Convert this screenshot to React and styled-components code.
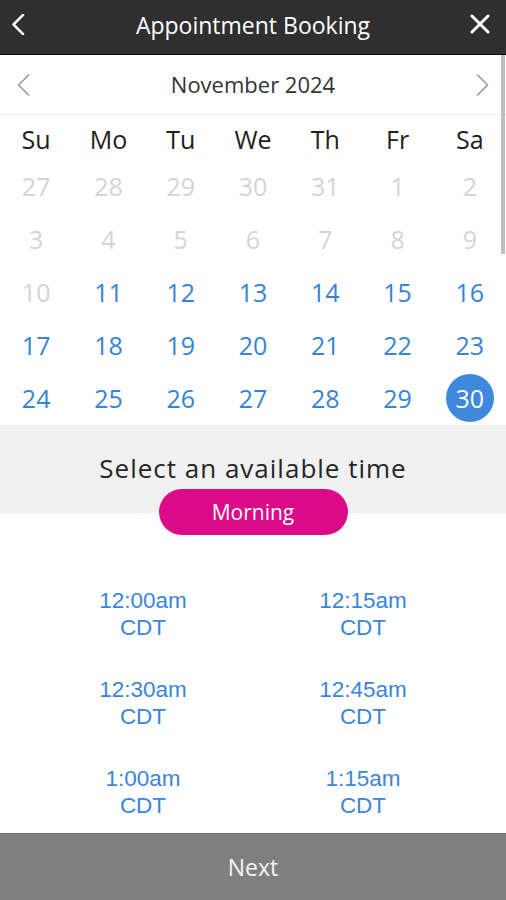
import React from 'react';
import styled, { createGlobalStyle } from 'styled-components';

const GlobalStyle = createGlobalStyle`
  html, body {
    margin: 0;
    padding: 0;
    background: #fff;
    font-family: "Open Sans", "Noto Sans", sans-serif;
  }
`;

const Screen = styled.div`
  position: relative;
  width: 506px;
  height: 900px;
  display: flex;
  flex-direction: column;
  overflow: hidden;
`;

const Header = styled.header`
  box-sizing: border-box;
  height: 55px;
  flex: 0 0 55px;
  padding-bottom: 6px;
  display: grid;
  grid-template-columns: 58px 1fr 58px;
  align-items: center;
  background: #2f2f2f;
  border-bottom: 1px solid #0c0c0c;
  color: #fff;
`;

const Title = styled.h1`
  margin: 0;
  text-align: center;
  font-size: 23px;
  font-weight: 400;
  line-height: 30px;
  padding-top: 2px;
`;

const IconButton = styled.div`
  display: flex;
  align-items: center;
  justify-content: flex-start;
  padding-left: ${({ end }) => (end ? '22px' : '12px')};
  height: 100%;
`;

const Body = styled.div`
  flex: 1;
  overflow: hidden;
`;

const MonthBar = styled.div`
  height: 59px;
  display: flex;
  align-items: center;
  justify-content: space-between;
  padding: 0 17px;
  border-bottom: 1px solid #e9e9e9;
`;

const MonthLabel = styled.span`
  font-size: 22px;
  color: #333;
  line-height: 30px;
  margin-top: -2px;
`;

const Grid = styled.div`
  display: grid;
  grid-template-columns: repeat(7, 1fr);
`;

const Weekday = styled.div`
  box-sizing: border-box;
  height: 44px;
  padding-top: 4px;
  display: flex;
  align-items: center;
  justify-content: center;
  font-size: 25px;
  color: #1e1e1e;
`;

const Day = styled.div`
  height: 53px;
  display: flex;
  align-items: center;
  justify-content: center;
  font-size: 25px;
  color: ${({ muted }) => (muted ? '#d4d4d4' : '#3584d6')};
`;

const Selected = styled.span`
  width: 48px;
  height: 48px;
  border-radius: 50%;
  background: #3f89dc;
  color: #fff;
  display: flex;
  align-items: center;
  justify-content: center;
`;

const TimeHeader = styled.div`
  margin-top: 1px;
  padding-top: 27px;
  display: flex;
  flex-direction: column;
  align-items: center;
  background: linear-gradient(#f1f1f1 0 88px, #fff 88px);
`;

const TimeTitle = styled.div`
  font-size: 26px;
  letter-spacing: 1px;
  line-height: 32px;
  color: #262626;
`;

const Pill = styled.div`
  margin-top: 5px;
  width: 189px;
  height: 46px;
  border-radius: 23px;
  background: #dc0a86;
  color: #fff;
  font-size: 21px;
  display: flex;
  align-items: center;
  justify-content: center;
`;

const Slots = styled.div`
  display: grid;
  grid-template-columns: 220px 220px;
  justify-content: center;
  row-gap: 35px;
  padding-top: 52px;
`;

const Slot = styled.div`
  text-align: center;
  font-family: "Liberation Sans", Arial, sans-serif;
  font-size: 22.5px;
  line-height: 27px;
  color: #3a86d8;
`;

const Footer = styled.div`
  flex: 0 0 66px;
  display: flex;
  align-items: center;
  justify-content: center;
  background: #7f7f7f;
  border-top: 1px solid #6f6f6f;
  color: #f4f4f4;
  font-size: 23px;
`;

const ScrollThumb = styled.div`
  position: absolute;
  top: 55px;
  right: 1px;
  width: 4px;
  height: 199px;
  background: #bfbfbf;
`;

const Chevron = ({ dir = 'left', color, width = 2, size = 22 }) => (
  <svg width={size * 0.6} height={size} viewBox="0 0 12 22" fill="none">
    <path
      d={dir === 'left' ? 'M11 1 L1 11 L11 21' : 'M1 1 L11 11 L1 21'}
      stroke={color}
      strokeWidth={width}
      strokeLinecap="round"
      strokeLinejoin="round"
    />
  </svg>
);

const Close = () => (
  <svg width="20" height="20" viewBox="0 0 20 20" fill="none">
    <path d="M2 2 L18 18 M18 2 L2 18" stroke="#fff" strokeWidth="3" strokeLinecap="round" />
  </svg>
);

const weekdays = ['Su', 'Mo', 'Tu', 'We', 'Th', 'Fr', 'Sa'];

const days = [
  ...[27, 28, 29, 30, 31].map((d) => ({ d, muted: true })),
  ...Array.from({ length: 30 }, (_, i) => ({ d: i + 1, muted: i + 1 <= 10 })),
];

const slots = ['12:00am', '12:15am', '12:30am', '12:45am', '1:00am', '1:15am'];

export default function App() {
  return (
    <Screen>
      <GlobalStyle />
      <Header>
        <IconButton>
          <Chevron color="#fff" width={2.6} size={21} />
        </IconButton>
        <Title>Appointment Booking</Title>
        <IconButton end>
          <Close />
        </IconButton>
      </Header>
      <Body>
        <MonthBar>
          <Chevron color="#9a9a9a" width={1.6} size={22} />
          <MonthLabel>November 2024</MonthLabel>
          <Chevron dir="right" color="#9a9a9a" width={1.6} size={22} />
        </MonthBar>
        <Grid>
          {weekdays.map((w) => (
            <Weekday key={w}>{w}</Weekday>
          ))}
          {days.map(({ d, muted }, i) => (
            <Day key={i} muted={muted}>
              {d === 30 && !muted ? <Selected>{d}</Selected> : d}
            </Day>
          ))}
        </Grid>
        <TimeHeader>
          <TimeTitle>Select an available time</TimeTitle>
          <Pill>Morning</Pill>
        </TimeHeader>
        <Slots>
          {slots.map((s) => (
            <Slot key={s}>
              {s}
              <br />
              CDT
            </Slot>
          ))}
        </Slots>
      </Body>
      <Footer>Next</Footer>
      <ScrollThumb />
    </Screen>
  );
}
